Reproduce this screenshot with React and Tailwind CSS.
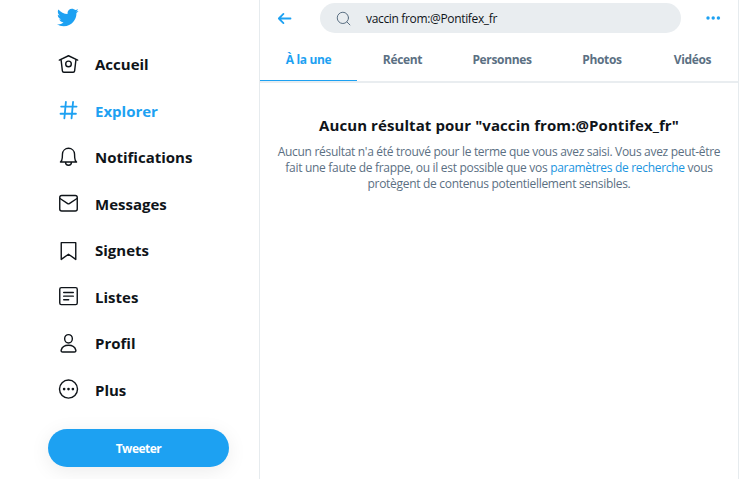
import React from 'react';

function Icon({ children, className = 'mt-px size-[21px]' }) {
  return (
    <svg viewBox="0 0 24 24" className={`block shrink-0 ${className}`} fill="none" stroke="currentColor" strokeWidth="1.6" strokeLinecap="round" strokeLinejoin="round">
      {children}
    </svg>
  );
}

const items = [
  { label: 'Accueil', icon: <><path d="M1.5 7 12 2l10.500 5M3.500 6.500l1.500 12.800c.1.900.8 1.600 1.700 1.600h10.600c.9 0 1.600-.7 1.700-1.600L20.500 6.500" /><circle cx="12" cy="11.300" r="3.200" /></> },
  { label: 'Explorer', active: true, icon: <path d="M9 2.300 7.300 20.900M17.200 2.300l-1.700 18.600M3.600 7.500h17.600M2.900 15.700h17.600" strokeWidth="2.100" /> },
  { label: 'Notifications', icon: <path d="M2.800 17.100c1.500-1.300 2-3 2.100-4.900l.2-4.100C5.300 4.200 8.300 1.500 12 1.500s6.700 2.700 6.900 6.600l.2 4.100c.1 1.900.6 3.600 2.100 4.900zM8.600 17.500c0 1.900 1.500 3.400 3.400 3.400s3.400-1.500 3.400-3.400" /> },
  { label: 'Messages', icon: <><rect x="2" y="2.800" width="20" height="17.700" rx="2.300" /><path d="m2.300 6.300 8.800 5.800c.6.400 1.200.400 1.800 0l8.800-5.800" /></> },
  { label: 'Signets', icon: <path d="M3.700 3h16.600v19.200L12 16.300l-8.300 5.900z" /> },
  { label: 'Listes', icon: <><rect x="2" y="1.800" width="20" height="19.500" rx="1.800" /><path d="M6.500 7.400h11M6.500 11.600h11M6.500 15.700h5.700" /></> },
  { label: 'Profil', icon: <><ellipse cx="12" cy="6.600" rx="4.400" ry="4.800" /><path d="M5.300 21.700c-1.200 0-2-.8-1.700-2 .9-3.600 4.500-5.700 8.400-5.700s7.500 2.100 8.400 5.700c.3 1.200-.5 2-1.700 2z" /></> },
  { label: 'Plus', icon: <><circle cx="12" cy="11.500" r="10.300" /><g fill="currentColor" stroke="none"><circle cx="7" cy="11.500" r="1.500" /><circle cx="12" cy="11.500" r="1.500" /><circle cx="17" cy="11.500" r="1.500" /></g></> },
];

function Sidebar() {
  return (
    <nav className="flex h-full w-[260px] shrink-0 flex-col border-r border-[#e6ebee] pl-12">
      <div className="flex h-[40.5px] items-start pt-[6px] pl-2">
        <svg viewBox="0 0 24 24" className="block size-[23px] text-[#1da1f2]" fill="currentColor">
          <path d="M23.643 4.937c-.835.37-1.732.62-2.675.733.962-.576 1.700-1.490 2.048-2.578-.9.534-1.897.922-2.958 1.130-.85-.904-2.060-1.470-3.400-1.470-2.572 0-4.658 2.086-4.658 4.660 0 .364.042.718.120 1.060-3.873-.195-7.304-2.050-9.602-4.868-.4.690-.63 1.490-.63 2.342 0 1.616.823 3.043 2.072 3.878-.764-.025-1.482-.234-2.110-.583v.060c0 2.257 1.605 4.140 3.737 4.568-.392.106-.803.162-1.227.162-.3 0-.593-.028-.877-.082.593 1.850 2.313 3.198 4.352 3.234-1.595 1.250-3.604 1.995-5.786 1.995-.376 0-.747-.022-1.112-.065 2.062 1.323 4.510 2.093 7.140 2.093 8.570 0 13.255-7.098 13.255-13.254 0-.2-.005-.402-.014-.602.910-.658 1.700-1.477 2.323-2.410z" />
        </svg>
      </div>
      {items.map(({ label, icon, active }) => (
        <a key={label} className={`flex h-[46.5px] shrink-0 items-center pl-[10px] ${active ? 'text-[#1da1f2]' : 'text-[#0f1419]'}`}>
          <Icon>{icon}</Icon>
          <span className="ml-4 pt-px text-[15px] leading-5 font-bold">{label}</span>
        </a>
      ))}
      <button className="mt-[16.5px] h-[38px] w-[181px] shrink-0 rounded-full bg-[#1da1f2] pt-px text-[12px] font-bold tracking-[-0.5px] text-white shadow-[0_4px_20px_rgba(0,0,0,0.08)]">
        Tweeter
      </button>
    </nav>
  );
}

export default function App() {
  return (
    <div className="flex h-[479px] w-[740px] overflow-hidden bg-white font-['Open_Sans','Noto_Sans',sans-serif]">
      <Sidebar />
      <main className="flex h-full w-[479px] flex-col border-r border-[#e6ebee]">
        <header className="flex h-9 items-center pl-[16px]">
          <Icon className="size-[17px] text-[#1da1f2]">
            <path d="M20.500 12H4M10.500 5.500 4 12l6.500 6.500" strokeWidth="2.500" />
          </Icon>
          <div className="ml-[27px] flex h-[30px] w-[361px] items-center rounded-full bg-[#e9edf0] pl-4">
            <Icon className="size-[15px] text-[#5b7083]">
              <circle cx="11" cy="11" r="9" /><path d="m17.500 17.500 4.800 4.800" />
            </Icon>
            <span className="ml-[15px] pt-px text-[12px] tracking-[-0.34px] text-[#0f1419]">vaccin from:@Pontifex_fr</span>
          </div>
          <svg viewBox="0 0 16 4" className="ml-6 block h-1 w-4 text-[#1da1f2]" fill="currentColor">
            <circle cx="3" cy="2" r="1.700" /><circle cx="8.200" cy="2" r="1.700" /><circle cx="13.400" cy="2" r="1.700" />
          </svg>
        </header>
        <div className="flex h-[47px] shrink-0 border-b-2 border-[#e9edf0] text-[12px] font-bold tracking-[-0.35px] text-[#5b7083]">
          <div className="flex w-[97px] items-center justify-center border-b border-[#1da1f2] pt-[3px] text-[#1da1f2]">À la une</div>
          <div className="flex w-[91px] items-center justify-center pt-[2px]">Récent</div>
          <div className="flex w-[108px] items-center justify-center pt-[2px]">Personnes</div>
          <div className="flex w-[92px] items-center justify-center pt-[2px]">Photos</div>
          <div className="flex w-[89px] items-center justify-center pt-[2px]">Vidéos</div>
        </div>
        <section className="flex flex-col items-center pt-8 text-center whitespace-nowrap">
          <h1 className="text-[15px] leading-5 font-bold tracking-[0.08px] text-[#0f1419]">Aucun résultat pour "vaccin from:@Pontifex_fr"</h1>
          <p className="mt-[9px] text-[12px] leading-4 tracking-[-0.305px] text-[#5b7083]">
            Aucun résultat n'a été trouvé pour le terme que vous avez saisi. Vous avez peut-être<br />
            fait une faute de frappe, ou il est possible que vos <a className="text-[#1b95e0]">paramètres de recherche</a> vous<br />
            protègent de contenus potentiellement sensibles.
          </p>
        </section>
      </main>
    </div>
  );
}
